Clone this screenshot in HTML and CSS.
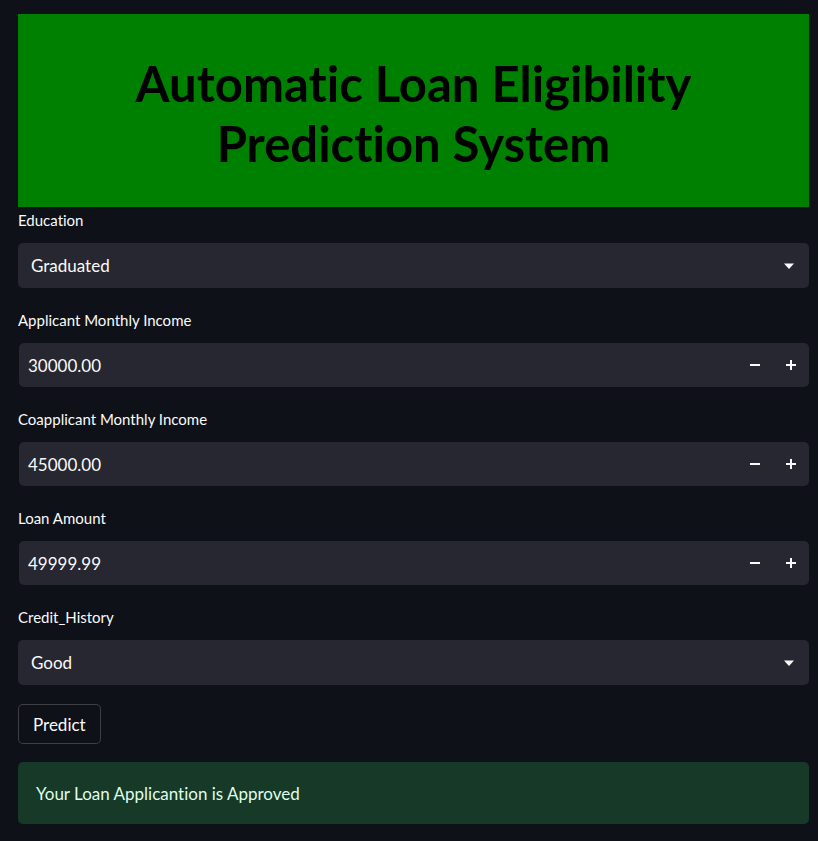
FILE: index.html
```html
<!DOCTYPE html>
<html>
<head>
<meta charset="utf-8">
<link rel="stylesheet" href="styles.css">
</head>
<body>
<main class="app">
  <div class="banner"><h1 class="title">Automatic Loan Eligibility<br>Prediction System</h1></div>

  <div class="field">
    <label class="label">Education</label>
    <div class="select"><span class="value">Graduated</span>
      <svg class="caret" width="12" height="8" viewBox="0 0 12 8"><path d="M1 1.5h10L6 7z" fill="#fafafa"/></svg>
    </div>
  </div>

  <div class="field">
    <label class="label">Applicant Monthly Income</label>
    <div class="number"><span class="num">30000.00</span>
      <span class="steps"><svg width="12" height="12" viewBox="0 0 12 12"><path d="M1 6h10" stroke="#fafafa" stroke-width="2"/></svg><svg width="12" height="12" viewBox="0 0 12 12"><path d="M1 6h10M6 1v10" stroke="#fafafa" stroke-width="2"/></svg></span>
    </div>
  </div>

  <div class="field">
    <label class="label">Coapplicant Monthly Income</label>
    <div class="number"><span class="num">45000.00</span>
      <span class="steps"><svg width="12" height="12" viewBox="0 0 12 12"><path d="M1 6h10" stroke="#fafafa" stroke-width="2"/></svg><svg width="12" height="12" viewBox="0 0 12 12"><path d="M1 6h10M6 1v10" stroke="#fafafa" stroke-width="2"/></svg></span>
    </div>
  </div>

  <div class="field">
    <label class="label">Loan Amount</label>
    <div class="number"><span class="num">49999.99</span>
      <span class="steps"><svg width="12" height="12" viewBox="0 0 12 12"><path d="M1 6h10" stroke="#fafafa" stroke-width="2"/></svg><svg width="12" height="12" viewBox="0 0 12 12"><path d="M1 6h10M6 1v10" stroke="#fafafa" stroke-width="2"/></svg></span>
    </div>
  </div>

  <div class="field">
    <label class="label">Credit_History</label>
    <div class="select"><span class="value">Good</span>
      <svg class="caret" width="12" height="8" viewBox="0 0 12 8"><path d="M1 1.5h10L6 7z" fill="#fafafa"/></svg>
    </div>
  </div>

  <div class="btnrow"><button class="btn">Predict</button></div>

  <div class="success">Your Loan Applicantion is Approved</div>
</main>
</body>
</html>
```

FILE: styles.css
```css
html, body {
  margin: 0;
  padding: 0;
  background: #0e1117;
  color: #fafafa;
  font-family: "Lato", "Noto Sans", sans-serif;
  font-variant-ligatures: none;
}
.app {
  padding: 14px 9px 0 18px;
  display: flex;
  flex-direction: column;
}
.banner {
  background: #008000;
  height: 193px;
  display: flex;
  align-items: center;
  justify-content: center;
}
.title {
  margin: 0;
  color: #000;
  font-size: 49px;
  line-height: 60px;
  font-weight: 700;
  text-align: center;
  padding-top: 4px;
}
.field {
  display: flex;
  flex-direction: column;
}
.label {
  font-size: 15px;
  height: 20px;
  line-height: 20px;
  margin-top: 3px;
  margin-bottom: 13px;
}
.field + .field .label { margin-top: 22px; }
.select {
  height: 45px;
  background: #262730;
  border-radius: 5px;
  display: flex;
  align-items: center;
  justify-content: space-between;
  padding: 0 14px 0 13px;
}
.value { font-size: 17px; }
.number {
  height: 44px;
  background: #262730;
  border-radius: 5px;
  margin-left: 1px;
  display: flex;
  align-items: center;
  justify-content: space-between;
  padding: 0 12px 0 9px;
}
.num { font-size: 17px; }
.steps {
  display: flex;
  gap: 24px;
  align-items: center;
}
.steps svg { display: block; }
.btnrow { margin-top: 19px; }
.btn {
  background: #0e1117;
  color: #fafafa;
  border: 1px solid rgba(250,250,250,0.2);
  border-radius: 5px;
  font-family: inherit;
  font-size: 17px;
  height: 40px;
  padding: 0 14px;
}
.success {
  margin-top: 18px;
  background: #173928;
  color: #dffde9;
  border-radius: 5px;
  height: 62px;
  display: flex;
  align-items: center;
  padding-left: 18px;
  font-size: 17px;
}
```
